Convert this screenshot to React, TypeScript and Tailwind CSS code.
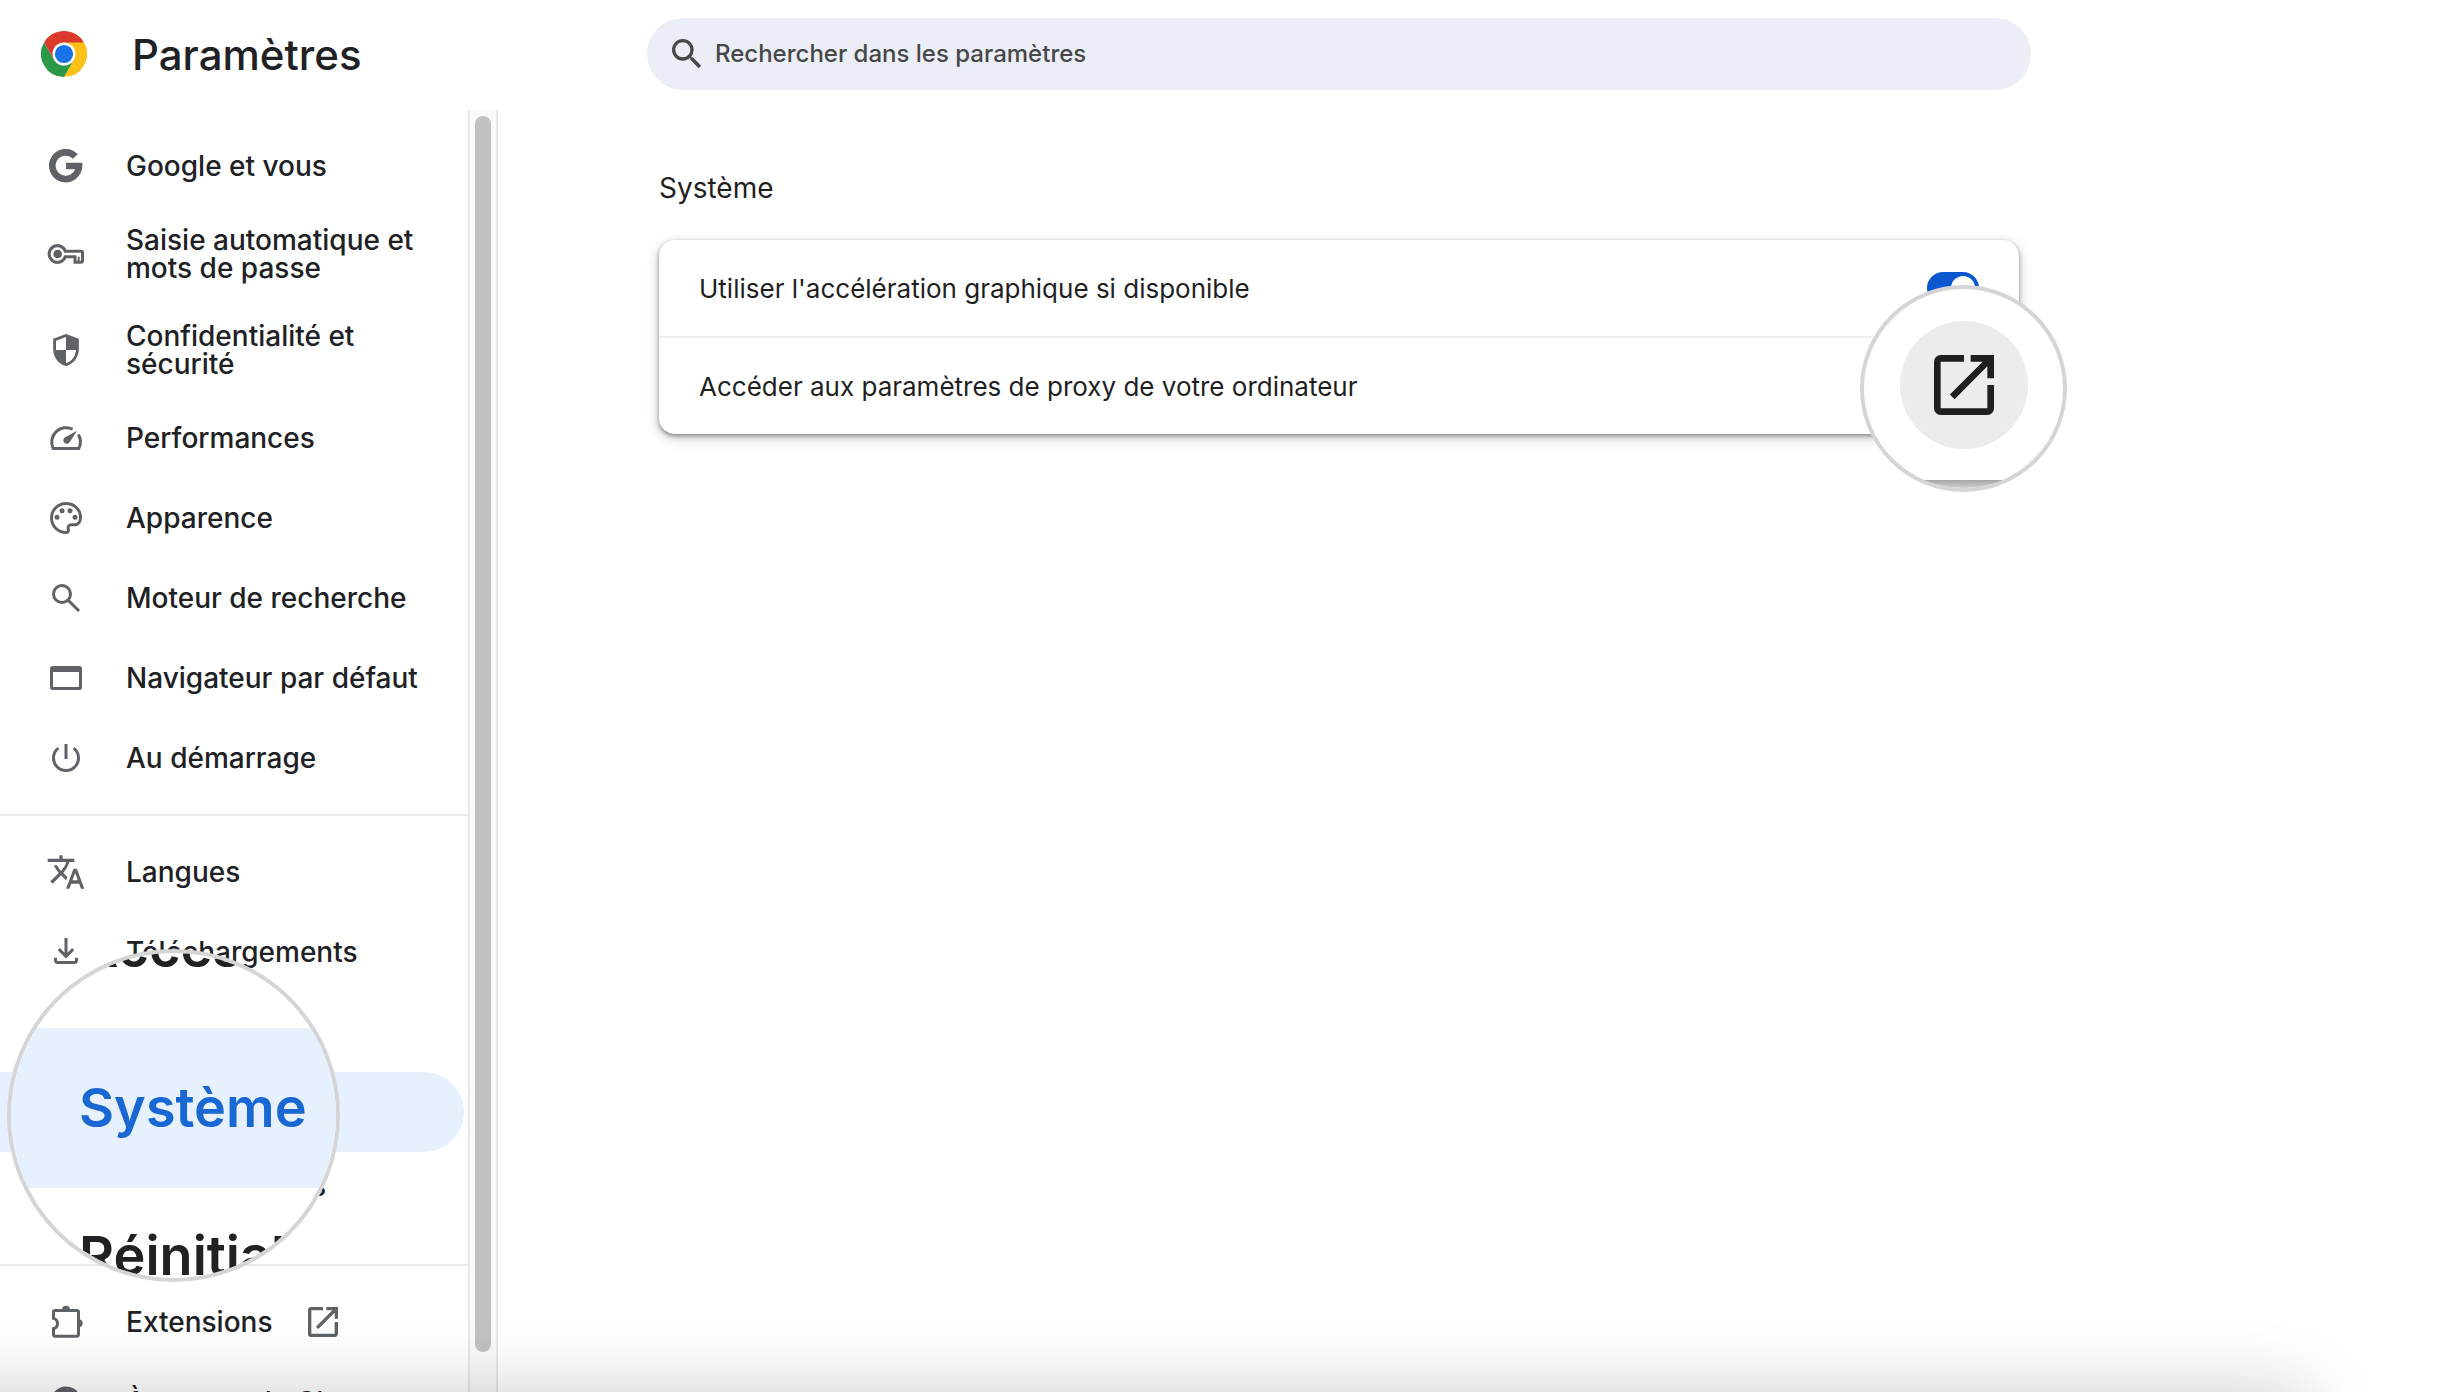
import type { ReactNode } from "react";
import { FaChrome } from "react-icons/fa";
import { MdOpenInNew, MdSearch, MdTranslate } from "react-icons/md";

type MenuItem = {
  label: string;
  icon: ReactNode;
  external?: boolean;
  active?: boolean;
};

const iconClass = "size-10 shrink-0 text-[#5f6368]";

const ChromeLogo = () => (
  <svg viewBox="0 0 48 48" className="size-[46px] shrink-0">
    <path fill="#db3a2c" d="M24 24 3.2 12A24 24 0 0 1 44.8 12z" />
    <path fill="#fcc016" d="M24 12H44.8A24 24 0 0 1 24 48L34.4 30z" />
    <path fill="#2a9846" d="M3.2 12A24 24 0 0 0 24 48L34.4 30 24 34 13.6 30z" />
    <path fill="#db3a2c" d="M3.2 12 13.6 30 24 12z" />
    <circle cx="24" cy="24" r="12" fill="#fff" />
    <circle cx="24" cy="24" r="9.5" fill="#1a73e8" />
  </svg>
);

const GoogleIcon = () => (
  <svg viewBox="0 0 24 24" className={iconClass} fill="none" stroke="currentColor" strokeWidth="4">
    <path d="M17.6 6.3A8 8 0 1 0 19.8 12H12" />
  </svg>
);

const KeyIcon = () => (
  <svg viewBox="0 0 24 24" className={iconClass} fill="none" stroke="currentColor" strokeWidth="1.8">
    <circle cx="7" cy="12" r="2.6" fill="currentColor" stroke="none" />
    <path d="M11.6 10.3H21q.9 0 .9.9V16q0 .9-.9.9h-3.6v-3.2h-5.8A5 5 0 1 1 11.6 10.3z" />
    <path d="M19.6 13.6V17" strokeWidth="1.2" />
  </svg>
);

const ShieldIcon = () => (
  <svg viewBox="0 0 24 24" className={iconClass} fill="currentColor">
    <path
      fillRule="evenodd"
      d="M12 2.4 4.3 5.2v6.3c0 4.7 3.2 9 7.7 10.100 4.500-1.100 7.700-5.400 7.700-10.100V5.200zM12 4.200V12h6c-.3 3.700-2.600 6.900-6 7.900V12H6V6.400z"
    />
  </svg>
);

const SpeedIcon = () => (
  <svg viewBox="0 0 24 24" className={iconClass}>
    <path
      fill="none"
      stroke="currentColor"
      strokeWidth="1.8"
      strokeLinejoin="round"
      d="M16 6.7A8.700 8.700 0 0 0 4.300 18.300H19.700A8.700 8.700 0 0 0 19.400 9.900"
    />
    <path fill="currentColor" d="M18.600 7.600 14.200 14.600A2.100 2.100 0 1 1 11 11.900z" />
  </svg>
);

const PaletteIcon = () => (
  <svg viewBox="0 0 24 24" className={iconClass} fill="none" stroke="currentColor" strokeWidth="1.8">
    <path d="M12 3.300a8.700 8.700 0 0 0 0 17.400c1.100 0 1.700-.9 1.400-1.800-.5-1.500.2-2.800 1.800-2.800H17.200c2.100 0 3.500-1.900 3.500-4.400C20.700 6.900 16.900 3.300 12 3.300z" />
    <g fill="currentColor" stroke="none">
      <circle cx="6.600" cy="11.500" r="1.500" />
      <circle cx="9.600" cy="7.600" r="1.500" />
      <circle cx="14.400" cy="7.600" r="1.500" />
      <circle cx="17.400" cy="11.500" r="1.500" />
    </g>
  </svg>
);

const SearchIcon = () => (
  <svg viewBox="0 0 24 24" className={iconClass} fill="none" stroke="currentColor" strokeWidth="1.8">
    <circle cx="9.600" cy="9.600" r="5.100" />
    <path d="M13.200 13.200 19.800 19.800" />
  </svg>
);

const BrowserIcon = () => (
  <svg viewBox="0 0 24 24" className={iconClass} fill="currentColor">
    <path
      fillRule="evenodd"
      d="M4 4.800h16a1.600 1.600 0 0 1 1.600 1.600v11.200a1.600 1.600 0 0 1-1.600 1.600H4a1.600 1.600 0 0 1-1.600-1.600V6.400A1.600 1.600 0 0 1 4 4.800zM4.200 8.400v9h15.600v-9z"
    />
  </svg>
);

const PowerIcon = () => (
  <svg viewBox="0 0 24 24" className={iconClass} fill="none" stroke="currentColor" strokeWidth="1.8">
    <path d="M7.400 6.100A7.500 7.500 0 1 0 16.600 6.100M12 3.600V12.600" />
  </svg>
);

const DownloadIcon = () => (
  <svg viewBox="0 0 24 24" className={iconClass} fill="none" stroke="currentColor" strokeWidth="1.8">
    <path d="M12 3.600V14.400M7.700 10.300 12 14.600 16.300 10.300M5.700 15.500V17q0 1.300 1.300 1.300H17q1.300 0 1.300-1.300V15.500" />
  </svg>
);

const AccessibilityIcon = () => (
  <svg viewBox="0 0 24 24" className={iconClass} fill="currentColor">
    <path d="M12 2a2 2 0 1 1 0 4 2 2 0 0 1 0-4zm9 7h-6v13h-2v-6h-2v6H9V9H3V7h18z" />
  </svg>
);

const WrenchIcon = () => (
  <svg viewBox="0 0 24 24" className={iconClass} fill="none" stroke="currentColor" strokeWidth="1.8">
    <path d="M20 6.500 16.500 10 14 7.500 17.500 4a5 5 0 0 0-6.500 6.500L4 17.500 6.500 20l7-7A5 5 0 0 0 20 6.500z" />
  </svg>
);

const RestoreIcon = () => (
  <svg viewBox="0 0 24 24" className={iconClass} fill="none" stroke="currentColor" strokeWidth="1.8">
    <path d="M4 12a8 8 0 1 0 3-6.200M4 3.500V9h5.500M12 8v4.500l3 2" />
  </svg>
);

const ExtensionIcon = () => (
  <svg viewBox="0 0 24 24" className={iconClass}>
    <path
      fill="none"
      stroke="currentColor"
      strokeWidth="1.8"
      d="M5.500 5.100H18.500q1 0 1 1V19.500q0 1-1 1H5.500q-1 0-1-1V16A3.200 3.200 0 0 0 4.500 9.800V6.100q0-1 1-1z"
    />
    <path fill="currentColor" d="M9.600 4.600a2.400 2.400 0 0 1 4.800 0zM20.200 10.400a2.500 2.500 0 0 1 0 4.800z" />
  </svg>
);

const menuSections: MenuItem[][] = [
  [
    { label: "Google et vous", icon: <GoogleIcon /> },
    { label: "Saisie automatique et mots de passe", icon: <KeyIcon /> },
    { label: "Confidentialité et sécurité", icon: <ShieldIcon /> },
    { label: "Performances", icon: <SpeedIcon /> },
    { label: "Apparence", icon: <PaletteIcon /> },
    { label: "Moteur de recherche", icon: <SearchIcon /> },
    { label: "Navigateur par défaut", icon: <BrowserIcon /> },
    { label: "Au démarrage", icon: <PowerIcon /> },
  ],
  [
    { label: "Langues", icon: <MdTranslate className={iconClass} /> },
    { label: "Téléchargements", icon: <DownloadIcon /> },
    { label: "Accessibilité", icon: <AccessibilityIcon /> },
    { label: "Système", icon: <WrenchIcon />, active: true },
    { label: "Réinitialiser les paramètres", icon: <RestoreIcon /> },
  ],
  [
    { label: "Extensions", icon: <ExtensionIcon />, external: true },
    { label: "À propos de Chrome", icon: <FaChrome className="mx-1 size-8 shrink-0 text-[#5f6368]" /> },
  ],
];

// Loupe posée sur l'entrée active du menu
const MenuMagnifier = () => (
  <div
    aria-hidden="true"
    className="absolute -top-[123px] left-[7px] z-10 size-[333px] overflow-hidden rounded-full border-4 border-[#d5d5d5] bg-white text-[54px] leading-[56px] font-semibold text-[#202124]"
  >
    <div className="-mt-[85px] w-[480px]">
      <p className="flex h-40 items-center pl-[68px]">Accessibilité</p>
      <p className="flex h-40 items-center bg-[#e6f0ff] pl-[68px] text-[#1967d2]">Système</p>
      <p className="flex h-48 items-center pl-[68px]">Réinitialiser les paramètres</p>
    </div>
  </div>
);

const MenuLink = ({ item }: { item: MenuItem }) => (
  <li className="relative">
    <a
      href="#"
      className={`mr-1 flex min-h-20 items-center gap-10 rounded-r-full py-5 pr-9 pl-[46px] ${
        item.active ? "bg-[#e6f0ff] text-[#1967d2]" : "text-[#202124]"
      }`}
    >
      {item.icon}
      <span className="flex items-center gap-[30px]">
        {item.label}
        {item.external && <MdOpenInNew className={iconClass} />}
      </span>
    </a>
    {item.active && <MenuMagnifier />}
  </li>
);

const Sidebar = () => (
  <div className="flex w-[498px] shrink-0">
    <nav className="w-[468px] py-4 text-[28px] leading-7 font-medium">
      {menuSections.map((section, i) => (
        <ul key={i} className={i > 0 ? "mt-4 border-t-2 border-[#e8e8e8] pt-4" : ""}>
          {section.map((item) => (
            <MenuLink key={item.label} item={item} />
          ))}
        </ul>
      ))}
    </nav>
    {/* Barre de défilement */}
    <div className="flex h-[calc(100vh-110px)] w-[30px] justify-center border-x-2 border-[#e8e8e8] bg-[#fafafa] pt-1.5 pb-10">
      <div className="w-4 rounded-full bg-[#c1c1c1]" />
    </div>
  </div>
);

// Loupe posée sur le bouton d'ouverture du proxy
const ProxyMagnifier = () => (
  <div className="absolute -right-12 -bottom-[58px] flex size-[207px] items-center justify-center overflow-hidden rounded-full border-4 border-[#d5d5d5] bg-white pb-2">
    <button
      type="button"
      aria-label="Ouvrir les paramètres de proxy"
      className="flex size-32 items-center justify-center rounded-full bg-[#ececec] text-[#1f1f1f]"
    >
      <MdOpenInNew className="size-20" />
    </button>
    <div className="absolute inset-x-0 bottom-0 h-2 bg-linear-to-b from-[#a6a6a6] to-[#cfcfcf]" />
  </div>
);

export default function App() {
  return (
    <div className="relative h-screen overflow-hidden bg-white font-[Inter,'Liberation_Sans',sans-serif] text-[#1f1f1f]">
      <header className="flex h-[110px] items-start">
        <div className="flex h-[108px] w-[647px] shrink-0 items-center gap-[45px] pl-[41px]">
          <ChromeLogo />
          <h1 className="text-[42px] font-medium text-[#202124]">Paramètres</h1>
        </div>
        <label className="mt-[18px] mr-8 flex h-[72px] w-full max-w-[1384px] items-center gap-2 rounded-full bg-[#ebeef7] px-5 text-[#474747]">
          <MdSearch className="size-10 shrink-0" />
          <input
            type="search"
            aria-label="Rechercher dans les paramètres"
            placeholder="Rechercher dans les paramètres"
            className="w-full bg-transparent text-[24px] font-medium outline-none placeholder:text-[#474747]"
          />
        </label>
      </header>

      <div className="flex items-start">
        <Sidebar />
        <main className="flex-1 pt-[60px] pr-12 pl-[161px]">
          <div className="max-w-[1360px]">
            <h2 className="text-[28px] leading-9">Système</h2>
            <section className="relative mt-[34px] rounded-2xl text-[26px] shadow-[0_2px_4px_rgba(0,0,0,0.4),0_4px_12px_2px_rgba(0,0,0,0.15)]">
              <label className="flex h-24 items-center justify-between px-10">
                <span>Utiliser l'accélération graphique si disponible</span>
                <input type="checkbox" role="switch" defaultChecked className="peer sr-only" />
                <span className="flex h-8 w-[52px] items-center justify-end rounded-full bg-[#0b57d0] p-1">
                  <span className="size-6 rounded-full bg-white" />
                </span>
              </label>
              <div className="flex h-[98px] items-center border-t-2 border-[#efefef] px-10">
                <span>Accéder aux paramètres de proxy de votre ordinateur</span>
              </div>
              <ProxyMagnifier />
            </section>
          </div>
        </main>
      </div>

      {/* Ombre portée en bas de la fenêtre */}
      <div className="pointer-events-none absolute top-full right-[130px] -left-24 z-20 h-40 shadow-[0_0_72px_rgba(0,0,0,0.2)]" />
    </div>
  );
}
